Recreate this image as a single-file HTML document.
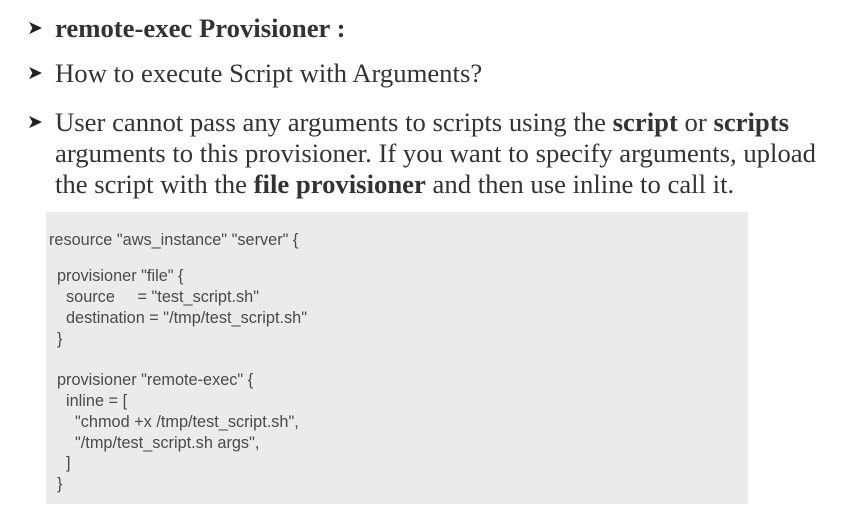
<!DOCTYPE html>
<html><head><meta charset="utf-8"><style>
body{margin:0;width:861px;height:528px;background:#fff;position:relative;overflow:hidden;font-family:"Liberation Serif",serif;color:#333}
.b{position:absolute;left:55px;font-size:26.7px;line-height:30px;white-space:nowrap}
.ar{position:absolute;left:27px;font-size:19px;line-height:30px;color:#222}
.box{position:absolute;left:46px;top:212px;width:702px;height:292px;background:#ebebeb}
.c{position:absolute;font-family:"Liberation Sans",sans-serif;font-size:16.3px;color:#4a4a4a;white-space:pre;line-height:20px}
</style></head><body>
<div class="ar" style="top:14px">➤</div><div class="b" style="top:13px"><b>remote-exec Provisioner :</b></div>
<div class="ar" style="top:59px">➤</div><div class="b" style="top:58px">How to execute Script with Arguments?</div>
<div class="ar" style="top:108px">➤</div>
<div class="b" style="top:107px">User cannot pass any arguments to scripts using the <b>script</b> or <b>scripts</b></div>
<div class="b" style="top:138px">arguments to this provisioner. If you want to specify arguments, upload</div>
<div class="b" style="top:169px">the script with the <b>file provisioner</b> and then use inline to call it.</div>
<div class="box"></div>
<div class="c" style="left:49px;top:230px">resource "aws_instance" "server" {</div>
<div class="c" style="left:57px;top:266px">provisioner "file" {</div>
<div class="c" style="left:66px;top:287px">source     = "test_script.sh"</div>
<div class="c" style="left:66px;top:308px">destination = "/tmp/test_script.sh"</div>
<div class="c" style="left:57px;top:329px">}</div>
<div class="c" style="left:57px;top:370px">provisioner "remote-exec" {</div>
<div class="c" style="left:66px;top:391px">inline = [</div>
<div class="c" style="left:75px;top:412px">"chmod +x /tmp/test_script.sh",</div>
<div class="c" style="left:75px;top:433px">"/tmp/test_script.sh args",</div>
<div class="c" style="left:66px;top:453px">]</div>
<div class="c" style="left:57px;top:474px">}</div>
</body></html>
